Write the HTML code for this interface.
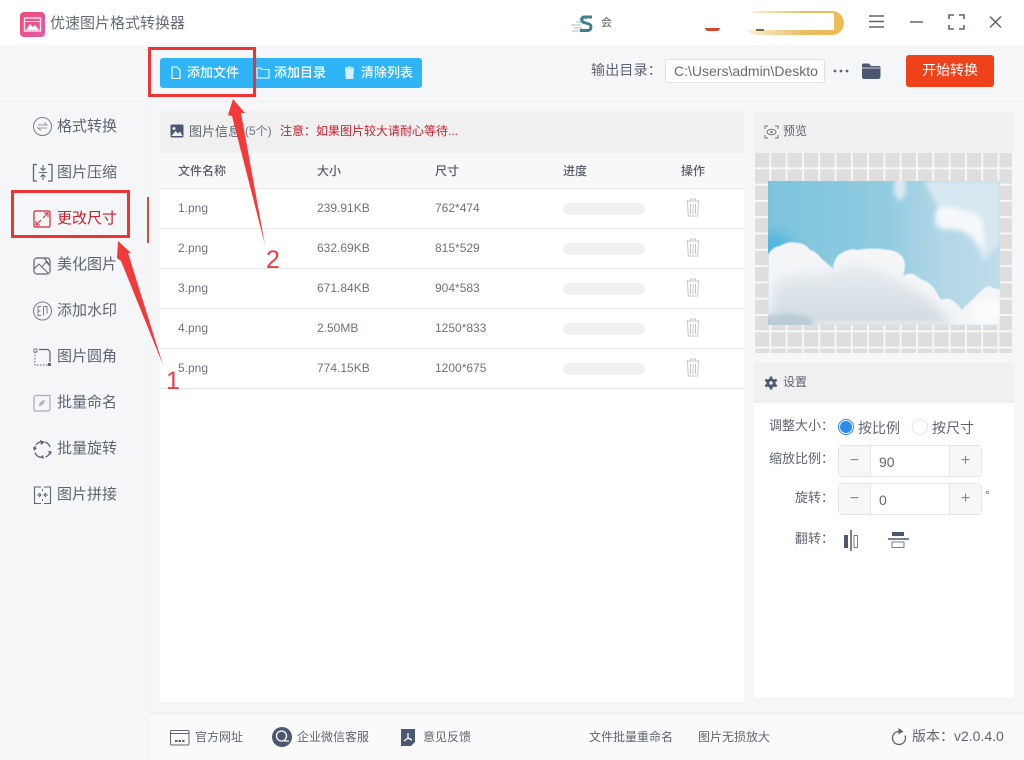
<!DOCTYPE html>
<html><head><meta charset="utf-8"><style>
*{box-sizing:border-box}
html,body{margin:0;padding:0;width:1024px;height:760px;overflow:hidden;background:#f5f6f8}
body{font-family:"Liberation Sans","Noto Sans CJK SC",sans-serif;color:#5f6470;position:relative}
.a{position:absolute;white-space:nowrap}
.s{position:absolute;overflow:visible}
.nav{position:absolute;left:57px;font-size:15px;line-height:20px;color:#5f6470}
.tb{position:absolute;top:64px;font-size:13px;line-height:18px;color:#fff;font-weight:500}
.th{position:absolute;top:163px;font-size:12px;line-height:16px;color:#555b68;font-weight:500}
.td{position:absolute;font-size:12px;line-height:16px;color:#6d7280}
.ln{position:absolute;left:160px;width:584px;height:1px;background:#e8e9eb}
.bar{position:absolute;left:563px;width:82px;height:12px;border-radius:6px;background:#f0f0f1}
.lb{position:absolute;font-size:13px;line-height:18px;color:#5f6470;white-space:nowrap}
.ft{position:absolute;top:729px;font-size:12px;line-height:16px;color:#60656f;white-space:nowrap}
.num{position:absolute;left:838px;width:144px;height:32px;border:1px solid #e2e4e9;border-radius:4px;background:#fff}
.num i{position:absolute;top:0;width:32px;height:30px;background:#f6f7f9;font-style:normal;text-align:center;line-height:30px;font-size:16px;color:#858a94}
.num b{position:absolute;left:40px;top:8px;font-weight:400;font-size:14px;line-height:16px;color:#60656f}
</style></head><body>
<div class="a" style="left:0;top:0;width:1024px;height:45px;background:#fff"></div>
<div class="a" style="left:20px;top:12px;width:25px;height:25px;border-radius:4px;background:linear-gradient(135deg,#ee4a70,#e45cae)"></div>
<svg class="s" style="left:20px;top:12px" width="25" height="25" viewBox="0 0 25 25"><rect x="4.500" y="6" width="16" height="13" fill="none" stroke="#fff" stroke-width="1.400" opacity=".85"/><path d="M4.500 9.500h16" stroke="#fff" stroke-width="1" opacity=".8"/><path d="M6 18l4-6 3 3 2-2 4 5z" fill="#fff"/></svg>
<div class="a" style="left:50px;top:13px;font-size:15px;line-height:21px;color:#666b76">优速图片格式转换器</div>

<svg class="s" style="left:570px;top:15px" width="24" height="19" viewBox="0 0 24 19"><path d="M9 4h8M6 7h8M1 10h10M4 13h8M2 16h9" stroke="#b9ced0" stroke-width="1.200"/><path d="M22 2H14c-3 0-3 5 0 5.500l5 1.500c3 1 2.500 6.500-1 6.500H10" fill="none" stroke="#3f7f88" stroke-width="3"/></svg>
<div class="a" style="left:601px;top:15px;font-size:11px;line-height:16px;color:#555">会</div>
<div class="a" style="left:705px;top:28px;width:15px;height:3px;background:#d9472b;border-radius:0 0 5px 5px"></div>
<div class="a" style="left:745px;top:11px;width:99px;height:24px;border-radius:12px;background:linear-gradient(90deg,#fbf3df,#e9bd62 60%,#ecbb55)"></div>
<div class="a" style="left:740px;top:13px;width:94px;height:17px;background:#fff"></div>
<div class="a" style="left:756px;top:29px;width:8px;height:2px;background:#7a6a40"></div>
<svg class="s" style="left:868px;top:14px" width="130" height="16" viewBox="0 0 130 16"><path d="M1 2h15M1 7.500h15M1 13h15" stroke="#5f6470" stroke-width="1.500" fill="none"/><path d="M42 8h13" stroke="#5f6470" stroke-width="1.500"/><path d="M81 5V1h5M91 1h5v4M96 11v4h-5M86 15h-5v-4" stroke="#5f6470" stroke-width="1.600" fill="none"/><path d="M122 2l11 11M133 2l-11 11" stroke="#5f6470" stroke-width="1.500" transform="translate(0 .5)"/></svg>

<!-- toolbar -->
<div class="a" style="left:0;top:101px;width:1024px;height:1px;background:#eff0f2"></div>
<div class="a" style="left:150px;top:101px;width:1px;height:612px;background:#f0f1f3"></div>
<div class="a" style="left:160px;top:58px;width:262px;height:30px;border-radius:3px;background:#2fb4f5"></div>
<svg class="s" style="left:171px;top:66px" width="10" height="14" viewBox="0 0 10 14"><path d="M1 1h5l3 3v8.500H1z" fill="none" stroke="#fff" stroke-width="1.100"/></svg>
<div class="tb" style="left:187px">添加文件</div>
<svg class="s" style="left:256px;top:66px" width="14" height="13" viewBox="0 0 14 13"><path d="M1 2h4l1 1.500h7V12H1z" fill="none" stroke="#fff" stroke-width="1"/></svg>
<div class="tb" style="left:274px">添加目录</div>
<svg class="s" style="left:344px;top:66px" width="11" height="13" viewBox="0 0 11 13"><path d="M1.500 3h8l-.7 9.500H2.200zM1 1.800h9M4 1h3" fill="#fff" stroke="#fff" stroke-width=".9" opacity=".8"/></svg>
<div class="tb" style="left:361px">清除列表</div>

<div class="a" style="left:591px;top:61px;font-size:14px;line-height:19px;letter-spacing:.2px;color:#5f6470">输出目录：</div>
<div class="a" style="left:665px;top:59px;width:160px;height:24px;border:1px solid #dfe2e7;border-radius:2px;background:#fff;overflow:hidden;font-size:14px;line-height:22px;padding-left:8px;color:#666b76">C:\Users\admin\Deskto</div>
<svg class="s" style="left:833px;top:68px" width="16" height="6"><circle cx="2" cy="3" r="1.400" fill="#5f6470"/><circle cx="8" cy="3" r="1.400" fill="#5f6470"/><circle cx="14" cy="3" r="1.400" fill="#5f6470"/></svg>
<svg class="s" style="left:861px;top:62px" width="20" height="18" viewBox="0 0 20 18"><path d="M1 3c0-1 .5-1.500 1.500-1.500H8l2 2.500h8c1 0 1.500.5 1.500 1.500v9c0 1.500-1 2.500-2.500 2.500H3c-1.200 0-2-1-2-2.500z" fill="#4d5870"/><path d="M1 6h18" stroke="#f5f6f8" stroke-width=".8"/></svg>
<div class="a" style="left:906px;top:55px;width:88px;height:32px;border-radius:3px;background:#f0421a;color:#fff;text-align:center;font-size:14px;line-height:31px">开始转换</div>

<!-- sidebar -->
<svg class="s" style="left:32px;top:116px" width="22" height="22" viewBox="0 0 22 22"><circle cx="10.500" cy="10.500" r="9" fill="none" stroke="#777c88" stroke-width="1"/><path d="M6 9h9l-3-2.500M15 12H6l3 2.500" fill="none" stroke="#999" stroke-width="1"/></svg>
<div class="nav" style="top:117px">格式转换</div>
<svg class="s" style="left:32px;top:163px" width="22" height="20" viewBox="0 0 22 20"><path d="M5 1.500H1.500v16.500H5M16 1.500h4v16.500h-4" fill="none" stroke="#5f6470" stroke-width="1.300"/><path d="M11 2v5M8.500 5l2.500 2.500L13.500 5M7 9.500h8M11 17v-5M8.500 14l2.500-2.500 2.500 2.500" fill="none" stroke="#5f6470" stroke-width="1.100"/></svg>
<div class="nav" style="top:163px">图片压缩</div>
<svg class="s" style="left:33px;top:210px" width="19" height="18" viewBox="0 0 19 18"><rect x="1" y="1" width="16" height="16" rx="1.500" fill="none" stroke="#c8283a" stroke-width="1.200"/><path d="M10 8l5-5M11 3h4v4M8 10l-5 5M3 11v4h4" fill="none" stroke="#c8283a" stroke-width="1"/></svg>
<div class="nav" style="top:209px;color:#c4202f">更改尺寸</div>
<svg class="s" style="left:33px;top:256px" width="19" height="19" viewBox="0 0 19 19"><rect x="1" y="2" width="16" height="16" rx="3" fill="none" stroke="#5f6470" stroke-width="1.200"/><path d="M1 13l5-5 9 9M9 11l4-5 4 4M11 2l5 6" fill="none" stroke="#5f6470" stroke-width="1"/></svg>
<div class="nav" style="top:255px">美化图片</div>
<svg class="s" style="left:32px;top:300px" width="22" height="22" viewBox="0 0 22 22"><circle cx="10.500" cy="11" r="9" fill="none" stroke="#777c88" stroke-width="1"/><path d="M9 6.500H6v9h3M6 11h2.500M11.500 6.500h3.500v7M11.500 6.500v9" fill="none" stroke="#777c88" stroke-width="1"/></svg>
<div class="nav" style="top:301px">添加水印</div>
<svg class="s" style="left:33px;top:348px" width="19" height="19" viewBox="0 0 19 19"><path d="M2 4v13h14" fill="none" stroke="#5f6470" stroke-width="1" stroke-dasharray="1.500 1.500"/><path d="M6 1.500h8c1.500 0 3 1.500 3 3V14" fill="none" stroke="#5f6470" stroke-width="1.200"/><rect x="1" y="1" width="3" height="3" fill="none" stroke="#5f6470" stroke-width=".8"/><rect x="15" y="15" width="3" height="3" fill="#5f6470"/></svg>
<div class="nav" style="top:347px">图片圆角</div>
<svg class="s" style="left:33px;top:394px" width="19" height="19" viewBox="0 0 19 19"><path d="M3 1.500h14v13c0 1.500-1 2.500-2.500 2.500H2c-.5 0-1-.5-1-1V4C1 2.500 2 1.500 3 1.500z" fill="none" stroke="#a9adb5" stroke-width="1.200"/><path d="M6 12c-.5-3 3-6 6-6 0 3-3 6.500-6 6z" fill="#b4b8bf"/></svg>
<div class="nav" style="top:393px">批量命名</div>
<svg class="s" style="left:33px;top:440px" width="19" height="19" viewBox="0 0 19 19"><path d="M3 5A8 8 0 0 1 9 1.500M12 2a8 8 0 0 1 5 5M17.500 11a8 8 0 0 1-5 6M8 17.500a8 8 0 0 1-6-5M1.500 10a8 8 0 0 1 1-4" fill="none" stroke="#5f6470" stroke-width="1.300"/><path d="M7 0l5 2-4 3zM19 12l-4-1 2 4zM11 19l-4-2 3-2zM0 7l4 1-3 3z" fill="#5f6470"/></svg>
<div class="nav" style="top:439px">批量旋转</div>
<svg class="s" style="left:33px;top:486px" width="19" height="19" viewBox="0 0 19 19"><path d="M8 1H1.500v16.500H8M11 1h6.500v16.500H11" fill="none" stroke="#5f6470" stroke-width="1.100"/><path d="M4 9h4M6 7l2 2-2 2M15 9h-4M13 7l-2 2 2 2M9.500 3v2M9.500 13v2" fill="none" stroke="#5f6470" stroke-width="1"/></svg>
<div class="nav" style="top:485px">图片拼接</div>
<div class="a" style="left:147px;top:197px;width:2px;height:46px;background:#c8533f"></div>

<!-- list panel -->
<div class="a" style="left:160px;top:111px;width:584px;height:591px;background:#fff"></div>
<div class="a" style="left:160px;top:111px;width:584px;height:42px;background:#f0f0f1"></div>
<div class="a" style="left:160px;top:153px;width:584px;height:35px;background:#f8f8f9"></div>
<svg class="s" style="left:170px;top:124px" width="14" height="14" viewBox="0 0 14 14"><rect x=".5" y=".5" width="13" height="13" rx="1.500" fill="#4d5870"/><circle cx="4" cy="4.500" r="1.500" fill="#f0f0f1"/><path d="M1.500 12l4-5 2.500 2.500 2-2 2.500 4.500z" fill="#f0f0f1"/></svg>
<div class="a" style="left:189px;top:123px;font-size:13px;line-height:17px;color:#5f6470">图片信息</div>
<div class="a" style="left:245px;top:123px;font-size:12px;line-height:17px;color:#6d7280">(5个)</div>
<div class="a" style="left:280px;top:123px;font-size:12px;line-height:16px;color:#c4202f">注意：如果图片较大请耐心等待...</div>
<div class="th" style="left:178px">文件名称</div><div class="th" style="left:317px">大小</div><div class="th" style="left:435px">尺寸</div><div class="th" style="left:563px">进度</div><div class="th" style="left:681px">操作</div>
<div class="ln" style="top:188px"></div><div class="ln" style="top:228px"></div><div class="ln" style="top:268px"></div><div class="ln" style="top:308px"></div><div class="ln" style="top:348px"></div><div class="ln" style="top:388px;background:#dfe0e3"></div>

<div class="td" style="left:178px;top:200px">1.png</div><div class="td" style="left:317px;top:200px">239.91KB</div><div class="td" style="left:435px;top:200px">762*474</div><div class="bar" style="top:203px"></div>
<div class="td" style="left:178px;top:240px">2.png</div><div class="td" style="left:317px;top:240px">632.69KB</div><div class="td" style="left:435px;top:240px">815*529</div><div class="bar" style="top:243px"></div>
<div class="td" style="left:178px;top:280px">3.png</div><div class="td" style="left:317px;top:280px">671.84KB</div><div class="td" style="left:435px;top:280px">904*583</div><div class="bar" style="top:283px"></div>
<div class="td" style="left:178px;top:320px">4.png</div><div class="td" style="left:317px;top:320px">2.50MB</div><div class="td" style="left:435px;top:320px">1250*833</div><div class="bar" style="top:323px"></div>
<div class="td" style="left:178px;top:360px">5.png</div><div class="td" style="left:317px;top:360px">774.15KB</div><div class="td" style="left:435px;top:360px">1200*675</div><div class="bar" style="top:363px"></div>
<svg class="s" style="left:685px;top:197px" width="16" height="190" viewBox="0 0 16 190">
<defs><g id="t"><path d="M1 3h14M5.500 3V1h5v2M2.500 3.500l.8 14.500h9.400l.8-14.500M5.500 6v10M8 6v10M10.500 6v10" fill="none" stroke="#c4c7cc" stroke-width="1"/></g></defs>
<use href="#t" y="1"/><use href="#t" y="41"/><use href="#t" y="81"/><use href="#t" y="121"/><use href="#t" y="161"/></svg>

<!-- preview -->
<div class="a" style="left:754px;top:112px;width:260px;height:241px;background:#f7f7f8"></div>
<div class="a" style="left:754px;top:112px;width:260px;height:41px;background:#f0f0f1"></div>
<svg class="s" style="left:764px;top:125px" width="15" height="14" viewBox="0 0 15 14"><path d="M1 4V1h3M11 1h3v3M14 10v3h-3M4 13H1v-3" fill="none" stroke="#6b707c" stroke-width="1"/><ellipse cx="7.500" cy="7" rx="4.500" ry="2.800" fill="none" stroke="#777" stroke-width="1"/><circle cx="7.500" cy="7" r="1.300" fill="#888"/></svg>
<div class="a" style="left:783px;top:123px;font-size:12px;line-height:17px;color:#5f6470">预览</div>
<div class="a" style="left:755px;top:153px;width:257px;height:200px;background-color:#dedede;background-image:linear-gradient(90deg,transparent 14.300px,#f7f7f7 14.300px),linear-gradient(180deg,transparent 14.300px,#f7f7f7 14.300px);background-size:16.300px 16.300px"></div>
<svg class="s" style="left:768px;top:181px" width="232" height="144" viewBox="0 0 232 144">
<defs>
<linearGradient id="sky" x1="0" y1="0" x2="1" y2="0"><stop offset="0" stop-color="#7cc4dd"/><stop offset=".5" stop-color="#90cbe0"/><stop offset=".75" stop-color="#b2d7e7"/><stop offset="1" stop-color="#bfdcea"/></linearGradient>
<linearGradient id="cl" x1="0" y1="0" x2="0" y2="1"><stop offset="0" stop-color="#e6ebef"/><stop offset="1" stop-color="#d2dbe1"/></linearGradient>
<filter id="b0" x="-10%" y="-10%" width="120%" height="120%"><feGaussianBlur stdDeviation=".5"/></filter>
<filter id="b1" x="-30%" y="-30%" width="160%" height="160%"><feGaussianBlur stdDeviation="6"/></filter>
<filter id="b3" x="-30%" y="-30%" width="160%" height="160%"><feGaussianBlur stdDeviation="2.500"/></filter>
<filter id="b5" x="-30%" y="-30%" width="160%" height="160%"><feGaussianBlur stdDeviation="5"/></filter>
<clipPath id="cp"><rect width="232" height="144"/></clipPath>
</defs>
<g clip-path="url(#cp)">
<rect width="232" height="144" fill="url(#sky)"/>
<ellipse cx="4" cy="66" rx="20" ry="14" fill="#52b5da" filter="url(#b1)"/>
<path d="M157 0H232V62L215 80C208 58 195 46 176 50 163 46 166 34 170 25 163 15 160 8 157 0z" fill="#d8e8f1" filter="url(#b3)"/>
<path d="M170 28C180 22 195 30 210 34 218 45 216 60 216 70 206 52 194 44 176 47 168 44 168 36 170 28z" fill="#f6f9fb" filter="url(#b3)"/>
<ellipse cx="132" cy="7" rx="6" ry="12" fill="#dcebf1" filter="url(#b3)"/>
<path d="M0 74C3 68 8 65 12 65C16 62 24 60 29 62C36 62 40 66 42 69C48 70 52 76 55 79C59 82 63 86 65 88C66 80 68 74 74 72C78 69 84 67 90 69C98 67 110 67 120 69C126 69 132 72 135 77C138 82 137 90 135 95C138 93 142 92 146 93C150 96 153 99 157 100C162 102 165 106 168 110C170 114 171 117 174 119C177 117 181 117 184 119C188 122 192 126 194 129C198 124 204 120 208 115C213 110 218 105 222 105C226 108 229 108 232 108V144H0z" fill="#f3f5f7" filter="url(#b0)"/>
<path d="M8 100C25 92 50 95 65 90C85 82 112 85 128 100C148 106 165 122 186 144H0z" fill="url(#cl)" filter="url(#b5)"/>
<ellipse cx="18" cy="141" rx="28" ry="8" fill="#b9cbd4" filter="url(#b3)"/>
<ellipse cx="218" cy="130" rx="14" ry="12" fill="#fbfcfc" filter="url(#b3)"/>
</g></svg>

<!-- settings -->
<div class="a" style="left:754px;top:363px;width:260px;height:335px;background:#fff"></div>
<div class="a" style="left:754px;top:363px;width:260px;height:40px;background:#f0f0f1"></div>
<svg class="s" style="left:764px;top:376px" width="14" height="14" viewBox="0 0 14 14"><circle cx="7" cy="7" r="3.200" fill="none" stroke="#4d5870" stroke-width="3"/><path d="M7 0.500v2.500M7 11v2.500M1.300 3.700l2.200 1.300M10.500 9l2.200 1.300M1.300 10.300l2.200-1.300M10.500 5l2.200-1.300" stroke="#4d5870" stroke-width="2.600"/></svg>
<div class="a" style="left:783px;top:374px;font-size:12px;line-height:17px;color:#5f6470">设置</div>
<div class="lb" style="left:769px;top:417px">调整大小：</div>
<div class="a" style="left:838px;top:419px;width:16px;height:16px;border-radius:50%;border:1px solid #2e89ee;background:#fff"></div>
<div class="a" style="left:840px;top:421px;width:12px;height:12px;border-radius:50%;background:#2e89ee"></div>
<div class="lb" style="left:858px;top:419px;font-size:14px">按比例</div>
<div class="a" style="left:912px;top:419px;width:16px;height:16px;border-radius:50%;border:1px solid #e2e4e8;background:#fff"></div>
<div class="lb" style="left:932px;top:419px;font-size:14px">按尺寸</div>
<div class="lb" style="left:769px;top:450px">缩放比例：</div>
<div class="num" style="top:445px"><i style="left:0;border-right:1px solid #e2e4e9">−</i><b>90</b><i style="right:0;border-left:1px solid #e2e4e9">+</i></div>
<div class="lb" style="left:795px;top:489px">旋转：</div>
<div class="num" style="top:483px"><i style="left:0;border-right:1px solid #e2e4e9">−</i><b>0</b><i style="right:0;border-left:1px solid #e2e4e9">+</i></div>
<div class="a" style="left:985px;top:488px;font-size:12px;line-height:14px;color:#60656f">°</div>
<div class="lb" style="left:795px;top:530px">翻转：</div>
<svg class="s" style="left:843px;top:530px" width="62" height="22" viewBox="0 0 62 22"><rect x="1" y="5" width="4" height="13" fill="#4d5870"/><path d="M8 0v21" stroke="#4d5870" stroke-width="1.500"/><rect x="11" y="5.500" width="3.500" height="12" fill="none" stroke="#777c88" stroke-width="1"/><rect x="49" y="2" width="12" height="4" fill="#4d5870"/><path d="M45 9h21" stroke="#4d5870" stroke-width="1.500"/><rect x="49" y="12" width="12" height="5.500" fill="none" stroke="#777c88" stroke-width="1"/></svg>

<!-- footer -->
<div class="a" style="left:150px;top:713px;width:874px;height:47px;background:#fafafb;border-top:1px solid #eceef1"></div>
<svg class="s" style="left:170px;top:730px" width="20" height="16" viewBox="0 0 20 16"><rect x=".5" y=".5" width="18.500" height="14.500" rx="1" fill="none" stroke="#5f6470" stroke-width="1"/><path d="M1 3.500h18" stroke="#5f6470" stroke-width="1"/><path d="M5 11h10" stroke="#5f6470" stroke-width="2" stroke-dasharray="2.500 1"/></svg>
<div class="ft" style="left:195px">官方网址</div>
<svg class="s" style="left:272px;top:727px" width="20" height="20" viewBox="0 0 20 20"><circle cx="10" cy="10" r="10" fill="#4d5870"/><circle cx="9.500" cy="9" r="5" fill="none" stroke="#fff" stroke-width="1.300"/><path d="M12 14h5" stroke="#fff" stroke-width="1.200"/></svg>
<div class="ft" style="left:297px">企业微信客服</div>
<svg class="s" style="left:400px;top:728px" width="16" height="19" viewBox="0 0 16 19"><path d="M1 1h14v13l-4 4H1z" fill="#4d5870"/><path d="M8 5v5M8 10l-4 3M8 10l4 2" stroke="#fff" stroke-width="1.300" fill="none"/></svg>
<div class="ft" style="left:423px">意见反馈</div>
<div class="ft" style="left:589px">文件批量重命名</div>
<div class="ft" style="left:698px">图片无损放大</div>
<svg class="s" style="left:890px;top:727px" width="17" height="19" viewBox="0 0 17 19"><path d="M9 4.500a6.500 6.500 0 1 0 6 4" fill="none" stroke="#5f6470" stroke-width="1.300"/><path d="M8.500 1l5 3.500-5 3z" fill="#5f6470"/></svg>
<div class="a" style="left:912px;top:727px;font-size:14px;line-height:18px;color:#60656f">版本：v2.0.4.0</div>

<!-- annotations -->
<svg class="s" style="left:0;top:0" width="1024" height="760" viewBox="0 0 1024 760">
<rect x="149.500" y="48.500" width="105" height="47" fill="none" stroke="#ee3535" stroke-width="3"/>
<rect x="12.500" y="191.500" width="116" height="45" fill="none" stroke="#ee3535" stroke-width="3"/>
<polygon points="118,241 131,253 128,253 163,365 121,261 117,258" fill="#f23a3a"/>
<polygon points="233,99 245,113 241,113 265,245 232,116 228,115" fill="#f23a3a"/>
</svg>
<div class="a" style="left:166px;top:366px;font-size:25px;line-height:30px;color:#e8404a">1</div>
<div class="a" style="left:266px;top:245px;font-size:25px;line-height:30px;color:#e8404a">2</div>
</body></html>
